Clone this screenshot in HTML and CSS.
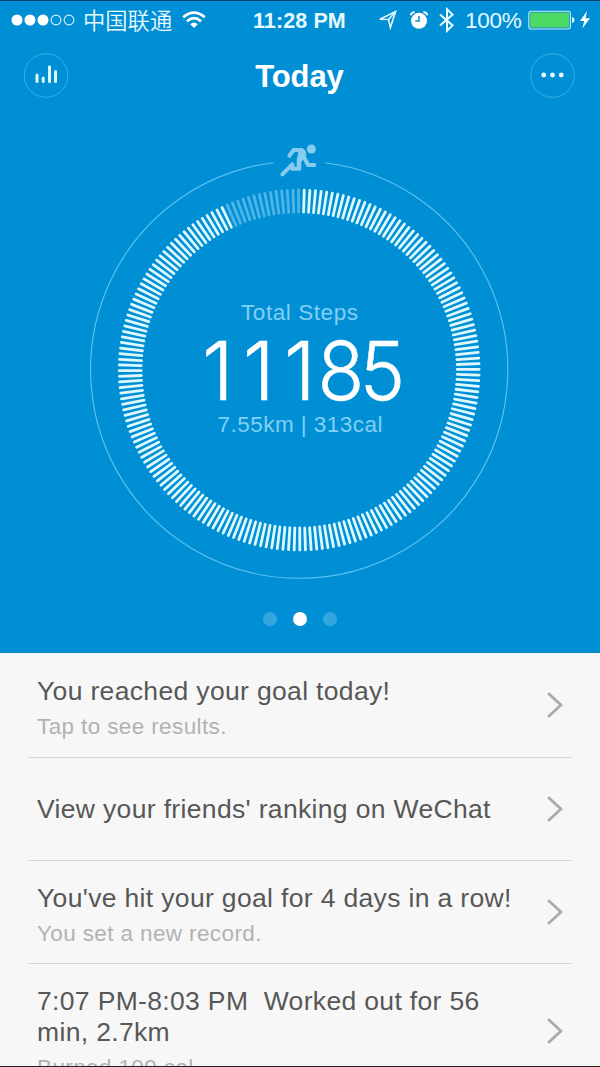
FILE: index.html
```html
<!DOCTYPE html>
<html lang="en">
<head>
<meta charset="utf-8">
<title>Today</title>
<link rel="stylesheet" href="styles.css">
</head>
<body>
<main class="screen">
  <section class="hero">
    <div class="status">
      <svg class="signal" width="64" height="12" viewBox="0 0 64 12">
        <g fill="#fff"><circle cx="6" cy="6" r="5.5"/><circle cx="19" cy="6" r="5.5"/><circle cx="32" cy="6" r="5.5"/></g>
        <g fill="none" stroke="#d3f3ff" stroke-width="1.1"><circle cx="45" cy="6" r="4.9"/><circle cx="58" cy="6" r="4.9"/></g>
      </svg>
      <span class="carrier">中国联通</span>
      <svg class="wifi" width="24" height="18" viewBox="0 0 24 18" fill="none" stroke="#fff" stroke-width="2.7">
        <path d="M1.2 6.2Q12 -3 22.8 6.2"/>
        <path d="M5 10.2Q12 4 19 10.2"/>
        <path d="M8.2 13.2Q12 9.6 15.8 13.2L12 17Z" fill="#fff" stroke="none"/>
      </svg>
      <span class="time">11:28 PM</span>
      <svg class="locate" width="20" height="20" viewBox="0 0 20 20" fill="none" stroke="#dff8ff" stroke-width="1.6" stroke-linejoin="miter">
        <path d="M1.8 9.3L17.6 1.6L12.4 17.6L10.6 9.5Z"/><path d="M10.6 9.5L17.2 2"/>
      </svg>
      <svg class="alarm" width="20" height="20" viewBox="0 0 20 20">
        <circle cx="10" cy="10.8" r="8" fill="#fff"/>
        <path d="M10 6V11H6.2" fill="none" stroke="#008fd5" stroke-width="1.5"/>
        <path d="M1.5 5.2Q2.6 2.4 5.6 2M14.4 2Q17.4 2.4 18.5 5.2" fill="none" stroke="#fff" stroke-width="1.8"/>
      </svg>
      <svg class="bluetooth" width="16" height="26" viewBox="0 0 16 26" fill="none" stroke="#e6faff" stroke-width="2">
        <path d="M1 7.4L13.6 18.4L8 23.8V2.2L13.6 7.6L1 18.6"/>
      </svg>
      <span class="percent">100%</span>
      <svg class="battery" width="48" height="20" viewBox="0 0 48 20">
        <rect x=".8" y="1.2" width="41.6" height="17.8" rx="2.5" fill="none" stroke="#c9f0f5" stroke-width="1.1"/>
        <rect x="2.2" y="2.6" width="38.8" height="15" rx="1" fill="#4cd964"/>
        <path d="M44 7Q46.6 7.6 46.6 10.1T44 13.2Z" fill="#e6faff"/>
      </svg>
      <svg class="bolt" width="12" height="20" viewBox="0 0 12 20"><path d="M8 1L1 11H5.2L3.4 18.6L11 8.2H6.6Z" fill="#fff"/></svg>
    </div>
    <header class="nav">
      <svg width="46" height="46" viewBox="0 0 46 46">
        <circle cx="23" cy="22.500" r="21.8" fill="none" stroke="#38b0e7"/>
        <g stroke="#dcf7ff" stroke-width="3" stroke-linecap="round"><path d="M14 22V28.400M20.200 25V28.400M26.500 13.800V28.400M32.500 18.400V28.400"/></g>
      </svg>
      <h1 class="title">Today</h1>
      <svg width="46" height="46" viewBox="0 0 46 46">
        <circle cx="22.500" cy="22.500" r="21.8" fill="none" stroke="#38b0e7"/>
        <g fill="#e6faff"><circle cx="13.7" cy="22" r="2.4"/><circle cx="22.5" cy="22" r="2.4"/><circle cx="31.3" cy="22" r="2.4"/></g>
      </svg>
    </header>
    <svg class="dial" width="440" height="450" viewBox="80 138 440 450">
      <path d="M325 162.7A208.6 208.6 0 1 1 273.4 162.7" fill="none" stroke="#5ec3f0" stroke-width="1.1"/>
      <g transform="translate(200 131) scale(.33333)" fill="none" stroke="#87ccee" stroke-width="12" stroke-linecap="round" stroke-linejoin="round">
        <circle cx="334" cy="54" r="13.500" fill="#87ccee" stroke="none"/>
        <path d="M268 74L281 57L304 57M308 70L324 102H343"/>
        <path d="M247 130L277 100V113H298V90"/>
        <path d="M281 52H306Q322 58 318 76L303 94V112H290V86L295 66Z" fill="#87ccee" stroke="none"/>
      </g>
      <g id="ticks" stroke-width="2.8" stroke-linecap="round"></g>
      <g class="dial-text">
        <text class="caption" x="241" y="320" textLength="117">Total Steps</text>
        <text class="steps" y="399.500" x="202 243 284">111</text>
        <text class="steps" transform="translate(317.500 399.500) scale(.95 1)" x="0 44.500">85</text>
        <text class="caption" x="217.500" y="431.500" textLength="165">7.55km | 313cal</text>
      </g>
    </svg>
    <div class="pager"><i class="dot"></i><i class="dot dot-active"></i><i class="dot"></i></div>
  </section>
  <section class="feed">
    <article class="row">
      <div class="copy"><h2 class="headline">You reached your goal today!</h2><p class="detail">Tap to see results.</p></div>
      <svg class="chevron" width="16" height="26" viewBox="0 0 16 26"><path d="M2 2L14 13L2 24"/></svg>
    </article>
    <article class="row">
      <div class="copy copy-single"><h2 class="headline">View your friends' ranking on WeChat</h2></div>
      <svg class="chevron" width="16" height="26" viewBox="0 0 16 26"><path d="M2 2L14 13L2 24"/></svg>
    </article>
    <article class="row">
      <div class="copy"><h2 class="headline">You've hit your goal for 4 days in a row!</h2><p class="detail">You set a new record.</p></div>
      <svg class="chevron" width="16" height="26" viewBox="0 0 16 26"><path d="M2 2L14 13L2 24"/></svg>
    </article>
    <article class="row row-tall">
      <div class="copy"><h2 class="headline">7:07 PM-8:03 PM&nbsp; Worked out for 56<br>min, 2.7km</h2><p class="detail">Burned 109 cal</p></div>
      <svg class="chevron" width="16" height="26" viewBox="0 0 16 26"><path d="M2 2L14 13L2 24"/></svg>
    </article>
  </section>
</main>
<script src="dial.js"></script>
</body>
</html>
```
FILE: dial.js
```js
// 200 ticks clockwise from the top; the last 14 are the unfilled part.
const group = document.getElementById('ticks');
for (let i = 1; i <= 200; i++) {
  const line = document.createElementNS('http://www.w3.org/2000/svg', 'line');
  line.setAttribute('x1', 299.2);
  line.setAttribute('x2', 299.2);
  line.setAttribute('y1', 190);
  line.setAttribute('y2', 212);
  line.setAttribute('stroke', i > 186 ? '#4db5e8' : '#dcf9ff');
  line.setAttribute('transform', `rotate(${i * 1.8 - 0.2} 299.2 370)`);
  group.appendChild(line);
}
```
FILE: styles.css
```css
* { box-sizing: border-box; margin: 0; padding: 0; }
body { font-family: "Liberation Sans", "Noto Sans CJK SC", sans-serif; background: #f7f7f7; }
svg { display: block; flex: none; }
.screen { height: 1067px; overflow: hidden; display: flex; flex-direction: column; border-top: 1px solid #0b3f70; border-bottom: 1px solid #222; }
.hero { height: 652px; flex: none; display: flex; flex-direction: column; background: #008fd5; border-bottom: 1px solid #0a83b8; }
.status { height: 38px; flex: none; display: flex; align-items: center; padding-left: 11px; color: #e6faff; }
.carrier { margin: 0 0 3px 8px; width: 91px; font: 350 22.3px/26px "Noto Sans CJK SC", sans-serif; white-space: nowrap; }
.wifi { margin: 0 0 0 8px; }
.time { margin: 2px 0 0 47px; width: 96px; font-size: 21.5px; font-weight: bold; letter-spacing: .1px; white-space: nowrap; }
.locate { margin-left: 29px; }
.alarm { margin-left: 11px; }
.bluetooth { margin-left: 10px; }
.percent { margin: 2px 0 0 10px; width: 58px; font-size: 22.5px; letter-spacing: -.3px; white-space: nowrap; }
.battery { margin-left: 5px; }
.bolt { margin-left: 3px; }
.nav { height: 74px; flex: none; display: flex; align-items: center; justify-content: space-between; padding: 0 24px 0 23px; }
.title { padding-top: 2px; color: #fff; font-size: 31px; line-height: 36px; font-weight: bold; letter-spacing: -.1px; }
.dial { margin: 25px auto 0; }
.caption { font-size: 22.5px; fill: #80d0f4; }
.steps { font-family: Inter, sans-serif; font-size: 80.5px; font-weight: 300; fill: #fff; stroke: #fff; stroke-width: .5px; }
.pager { display: flex; justify-content: center; gap: 16px; margin-top: 24px; }
.dot { width: 14px; height: 14px; border-radius: 50%; background: #34a6df; }
.dot-active { background: #fff; }
.feed { flex: 1; overflow: hidden; padding: 0 28px; }
.row { height: 103px; display: flex; align-items: center; justify-content: space-between; padding: 0 9px 0 9px; border-bottom: 1px solid #d8d8d8; }
.row:first-child { height: 105px; }
.row-tall { height: 134px; }
.copy { padding-top: 4px; }
.copy-single { padding-top: 0; }
.headline { font-size: 26.5px; line-height: 31px; font-weight: normal; letter-spacing: .34px; color: #575757; white-space: nowrap; }
.detail { margin-top: 7px; font-size: 22.5px; line-height: 25px; letter-spacing: .38px; color: #b2b2b2; }
.chevron { fill: none; stroke: #aaa; stroke-width: 2.8; stroke-linecap: round; }
```
